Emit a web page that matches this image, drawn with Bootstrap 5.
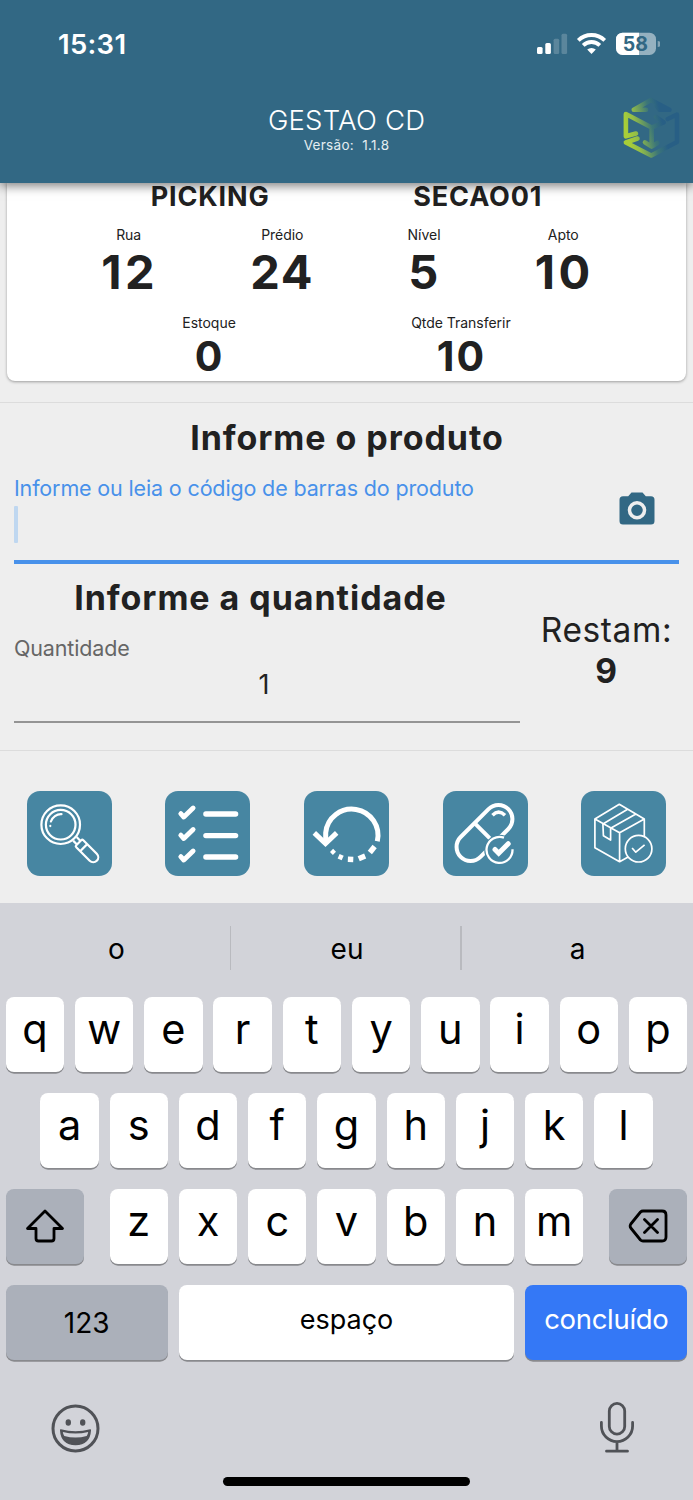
<!DOCTYPE html>
<html lang="pt-BR">
<head>
<meta charset="utf-8">
<meta name="viewport" content="width=device-width, initial-scale=1">
<title>Gestao CD</title>
<link href="https://cdn.jsdelivr.net/npm/bootstrap@5.3.0/dist/css/bootstrap.min.css" rel="stylesheet">
<style>
body{font-family:Inter,"Liberation Sans",sans-serif;background:#eee;color:#212121;height:1500px;overflow:hidden;font-feature-settings:"calt" 0}
svg{display:block;flex:none}
.topo{height:183px;background:#326884;color:#fff;z-index:2;box-shadow:0 3px 10px rgba(0,0,0,.5)}
.status{height:88px;padding:0 33px 0 58px}
.hora{font-size:27.5px;font-weight:600;letter-spacing:.3px;padding-top:2px}
.titulo{font-size:27.5px;line-height:34px;font-weight:300;margin-top:9px;letter-spacing:.2px}
.versao{font-size:13.5px;line-height:16px;white-space:pre;color:#e4edf1;letter-spacing:.3px}
.ficha{height:198px;margin:0 7px;border:0;border-radius:0 0 8px 8px;box-shadow:0 1px 3px rgba(0,0,0,.35)}
.local{font-size:27px;line-height:32px;height:28px;margin-top:-2px;font-weight:700;letter-spacing:.85px}
.rot{font-size:14px;line-height:20px;letter-spacing:-.03px}
.num{font-size:47px;line-height:54px;font-weight:700;letter-spacing:1.6px}
.largo{letter-spacing:3.4px;margin:0 -1px 0 1px}
.num2{font-size:41px;line-height:46px;font-weight:700;letter-spacing:2px;padding-left:1px}
.linha{height:1px;background:#dcdcdc}
.sec{font-size:34px;font-weight:700;letter-spacing:.95px;padding-left:1px}
.etq{font-size:21.5px;line-height:24px;letter-spacing:-.15px}
.campo{height:91px;border-bottom:4px solid #4891ea;margin:0 14px;padding:3px 24px 0 0}
.cursor{width:4px;height:37px;margin-top:6px;background:#bfd7f0;border-radius:1px}
.qtd{width:506px;margin-left:14px}
.qval{font-size:27px;line-height:32px;margin-top:9px;padding-bottom:20px;border-bottom:2px solid #949494;padding-right:6px}
.restam{font-size:33.5px;line-height:41px;padding-top:46px;letter-spacing:.6px}
.tools{height:152px;padding-top:40px}
.tile{width:85px;height:85px;border-radius:13px;background:#4786a2}
.tile svg{stroke:#fff;fill:none}
.teclado{height:597px;background:#d2d3d9;color:#000}
.sug{height:94px;font-size:28px}
.sug .col{padding-bottom:3px}
.sug .col:first-child{padding-left:1px}
.sug span{width:1.5px;height:44px;margin:-4px .5px 0 -2px;background:#b9babf}
.teclas{gap:21px;padding:0 5.7px}
.tr{height:75px;gap:10.9px}
.k{flex:0 0 58.35px;height:75px;background:#fff;border-radius:8px;box-shadow:0 1.7px 0 #88898d;font-size:41.5px;padding-bottom:10px}
.kg{background:#abb0ba;padding:0}
.k2{flex-basis:78px}
.k2 svg{margin:-1px 0 0}
.k3{flex-basis:162px;font-size:28px}
.kesp{flex:1;font-size:27px;padding-bottom:4px}
.kok{background:#3478f6;color:#fff;padding-bottom:5px;font-size:27.5px;letter-spacing:-.3px}
.pe{height:93px;padding:0 58px 0 51px}
.home{width:247px;height:8.5px;border-radius:5px;background:#000;margin-top:24px}
</style>
</head>
<body>
<header class="topo position-relative">
<div class="status d-flex justify-content-between align-items-center">
<div class="hora">15:31</div>
<svg width="124" height="24" viewBox="0 0 124 24" style="margin-top:-1px"><g fill="#fff"><rect x="1" y="15" width="5.6" height="7" rx="1.5"/><rect x="9.3" y="11" width="5.6" height="11" rx="1.5"/><g opacity=".2"><rect x="17.6" y="6.7" width="5.6" height="15.3" rx="1.5"/><rect x="25.500" y="1.7" width="5.6" height="20.3" rx="1.5"/></g></g>
<g fill="none" stroke="#fff" stroke-width="3.9"><path d="M42.3 8.3a19 19 0 0 1 26.4 0"/><path d="M47.2 13.4a12 12 0 0 1 16.6 0"/></g><path fill="#fff" d="M51.2 17.6a6.5 6.5 0 0 1 8.6 0L55.500 22z"/>
<rect x="80" y=".7" width="40" height="22.300" rx="6.500" fill="#95b1c0"/><path fill="#fff" d="M86.500.7H103V23H86.500a6.500 6.500 0 0 1-6.500-6.500V7.200a6.500 6.500 0 0 1 6.500-6.500z"/><path fill="#84a4b5" d="M121.700 9a3 3 0 0 1 0 6z"/><text x="99.300" y="19" text-anchor="middle" font-size="19.500" font-weight="700" fill="#326884">58</text></svg>
</div>
<div class="d-flex" style="margin-top:6px">
<div class="col"></div>
<div class="text-center"><div class="titulo">GESTAO CD</div><div class="versao">Versão:  1.1.8</div></div>
<div class="col d-flex justify-content-end"><svg width="73" height="68" viewBox="0 0 73 68" fill="none" stroke="url(#lg)" stroke-width="4.600" stroke-linecap="round" stroke-linejoin="round"><defs><linearGradient id="lg" gradientUnits="userSpaceOnUse" x1="6" y1="34" x2="42" y2="26"><stop offset="0" stop-color="#a8ce38"/><stop offset=".25" stop-color="#93bd48"/><stop offset=".7" stop-color="#3c7678"/><stop offset="1" stop-color="#285f85"/></linearGradient></defs><path d="M26 15.700H13.800L31 6l18.500 9.800H39.500l-3-4"/><path d="M16 39.500L5.900 42.300V20L31.700 33.500V52.500M25 48.300l6.700 4.400 5.600-3.700M31.700 33.500l12-5.200-7.700-5.400"/><path d="M17.500 44.500L5.900 48.500 31.300 61.500 57 48V20.500L47.700 25"/></svg></div>
</div>
</header>
<section class="ficha card">
<div class="local d-flex justify-content-evenly"><span>PICKING</span><span>SECAO01</span></div>
<div class="d-flex justify-content-evenly text-center pt-3">
<div><div class="rot">Rua</div><div class="num largo">12</div></div>
<div><div class="rot">Prédio</div><div class="num">24</div></div>
<div><div class="rot">Nível</div><div class="num">5</div></div>
<div><div class="rot">Apto</div><div class="num largo">10</div></div>
</div>
<div class="d-flex justify-content-evenly text-center" style="margin-top:14px">
<div><div class="rot">Estoque</div><div class="num2">0</div></div>
<div><div class="rot">Qtde Transferir</div><div class="num2">10</div></div>
</div>
</section>
<div class="linha" style="margin-top:21px"></div>
<section>
<div class="sec text-center" style="line-height:70px">Informe o produto</div>
<div class="campo d-flex justify-content-between">
<div><div class="etq" style="color:#4891ea">Informe ou leia o código de barras do produto</div><div class="cursor"></div></div>
<svg width="36" height="33" viewBox="0 0 36 33" style="margin-top:16px"><path fill="#326884" d="M12.500.5h11l3.300 3.700H32a3.500 3.500 0 0 1 3.500 3.500V29a3.500 3.500 0 0 1-3.500 3.500H4A3.500 3.500 0 0 1 .5 29V7.700A3.500 3.500 0 0 1 4 4.200h5.200z"/><circle cx="18" cy="18.200" r="7.500" fill="none" stroke="#eee" stroke-width="3.500"/></svg>
</div>
<div class="d-flex">
<div class="qtd"><div class="sec text-center" style="line-height:68px;padding-right:14px">Informe a quantidade</div>
<div class="etq" style="color:#666;margin-top:4px">Quantidade</div><div class="qval text-center">1</div></div>
<div class="restam flex-fill text-center">Restam:<div class="fw-bold">9</div></div>
</div>
<div class="linha" style="margin-top:27px"></div>
</section>
<nav class="tools d-flex justify-content-around">
<div class="tile"><svg width="85" height="85" stroke-width="2.200"><circle cx="33.700" cy="33.700" r="19.300"/><circle cx="33.700" cy="33.700" r="14.800"/><path stroke-linecap="round" d="M23.900 30.500A10.500 10.500 0 0 1 34.500 23.200M23.300 34.900v.2"/><g transform="translate(33.700 33.700) rotate(45)"><path d="M20 -2.500h5.500M20 2.500h5.500M27-5H46a5 5 0 0 1 0 10H27a1.500 1.500 0 0 1-1.500-1.500v-7A1.500 1.500 0 0 1 27-5zM32.500-5V5"/></g></svg></div>
<div class="tile"><svg width="85" height="85" stroke-linecap="round" stroke-linejoin="round"><g transform="translate(.5)"><path stroke-width="5.400" d="M40.400 23h29.700M40.400 44.600h29.700M40.400 66h29.700"/><path stroke-width="4.900" d="M15.300 22.700l3 3.300L27.600 17M15.300 44.200l3 3.300L27.600 38.500M15.300 65.700l3 3.300L27.600 60"/></g></svg></div>
<div class="tile"><svg width="85" height="85"><path stroke-width="5" d="M21.700 53V41.700a26.200 26.200 0 1 1 51.600 8.500"/><path stroke-width="5" d="M10.300 41.900l11.200 10.700 11.200-10.700"/><g fill="#fff" stroke="none" transform="translate(47.500 41.700)"><rect x="24" y="-3.800" width="5.400" height="7.600" transform="rotate(39)"/><rect x="24" y="-3.500" width="5.400" height="7" transform="rotate(67)"/><rect x="24" y="-2.700" width="5.400" height="5.400" transform="rotate(92)"/><rect x="24.200" y="-2.200" width="5" height="4.400" transform="rotate(114)"/><rect x="24.400" y="-2" width="4.500" height="4" transform="rotate(134)"/></g></svg></div>
<div class="tile"><svg width="85" height="85"><g transform="translate(41.500 42) rotate(-45)" stroke-width="4"><rect x="-33.700" y="-14" width="67.400" height="28" rx="14"/><path d="M0-14V14"/></g><path stroke-width="3.600" d="M49.500 24.200q6-6 12.500 0"/><circle cx="56.500" cy="59" r="15.300" fill="#4786a2" stroke="none"/><path stroke-width="2.300" d="M61 46.700A13 13 0 1 0 69.500 58.200"/><path stroke-width="5" stroke-linecap="round" d="M52 58.500l3.700 3.700 9.500-9.500"/></svg></div>
<div class="tile"><svg width="85" height="85" stroke-width="1.700" stroke-linejoin="round"><g transform="translate(-.4)"><path d="M38.700 13.300L14.300 28v28.700L39 70.700V41.700L63.700 28zM14.300 28L39 41.700M63.700 28V47M39 70.700l9-5M47 18.300L22.300 33l.5 11.800L30 49V37.300L55.300 23"/><circle cx="58" cy="57.700" r="13.300" fill="#4786a2"/><path d="M51.500 57l3.700 4.200 8.800-7.400"/></g></svg></div>
</nav>
<section class="teclado">
<div class="sug d-flex align-items-center text-center"><div class="col">o</div><span></span><div class="col">eu</div><span></span><div class="col">a</div></div>
<div class="teclas d-flex flex-column">
<div class="tr d-flex justify-content-center" data-k="qwertyuiop"></div>
<div class="tr d-flex justify-content-center" data-k="asdfghjkl"></div>
<div class="d-flex justify-content-between"><div class="k kg k2 d-flex align-items-center justify-content-center"><svg width="40" height="34" viewBox="0 0 40 34" fill="none" stroke="#000" stroke-width="2.800" stroke-linejoin="round"><path d="M20 2L37.500 19.500H29V29.500Q29 32 26.500 32H13.500Q11 32 11 29.500V19.500H2.500z"/></svg></div><div class="tr d-flex" data-k="zxcvbnm"></div><div class="k kg k2 d-flex align-items-center justify-content-center"><svg width="40" height="34" viewBox="0 0 40 34" fill="none" stroke="#000" stroke-width="2.800" stroke-linejoin="round" stroke-linecap="round"><path d="M15 2H34Q38 2 38 6V28Q38 32 34 32H15Q13.500 32 12.500 31L2.800 19Q1.500 17 2.800 15L12.500 3Q13.500 2 15 2zM16.500 10.500l13 13M29.500 10.500l-13 13"/></svg></div></div>
<div class="tr d-flex"><div class="k kg k3 d-flex align-items-center justify-content-center">123</div><div class="k kesp d-flex align-items-center justify-content-center">espaço</div><div class="k k3 kok d-flex align-items-center justify-content-center">concluído</div></div>
</div>
<div class="pe d-flex justify-content-between align-items-end">
<svg width="49" height="49" viewBox="0 0 49 49"><circle cx="24.500" cy="24.500" r="22.500" fill="none" stroke="#505257" stroke-width="3"/><ellipse cx="17.300" cy="18.500" rx="2.700" ry="3.200" fill="#505257"/><ellipse cx="31.700" cy="18.500" rx="2.700" ry="3.200" fill="#505257"/><path d="M9.700 26q14.800 4 29.600 0-.8 14.500-14.800 14.500T9.700 26z" fill="#505257" stroke="#505257" stroke-width="1.500" stroke-linejoin="round"/><path d="M11.800 28q12.700 3 25.400 0-.4 2.600-1.500 4-11.200 3-22.400 0-1.200-1.600-1.500-4z" fill="#d2d3d9"/></svg>
<svg width="36" height="52" viewBox="0 0 36 52" fill="none" stroke="#505257" stroke-width="2.800" stroke-linecap="round"><rect x="10.300" y="2.400" width="15.400" height="30.700" rx="7.700"/><path d="M2.400 21.500v3.500a15.600 15.600 0 0 0 31.200 0v-3.500M18 41v9M7.500 50.200h21"/></svg>
</div>
<div class="home mx-auto"></div>
</section>
<script src="https://cdn.jsdelivr.net/npm/bootstrap@5.3.0/dist/js/bootstrap.bundle.min.js"></script>
<script>
// build the letter keys of each row
document.querySelectorAll('[data-k]').forEach(row => {
  for (const c of row.dataset.k) {
    const key = document.createElement('div');
    key.className = 'k d-flex align-items-center justify-content-center';
    key.textContent = c;
    row.append(key);
  }
});
</script>
</body>
</html>
